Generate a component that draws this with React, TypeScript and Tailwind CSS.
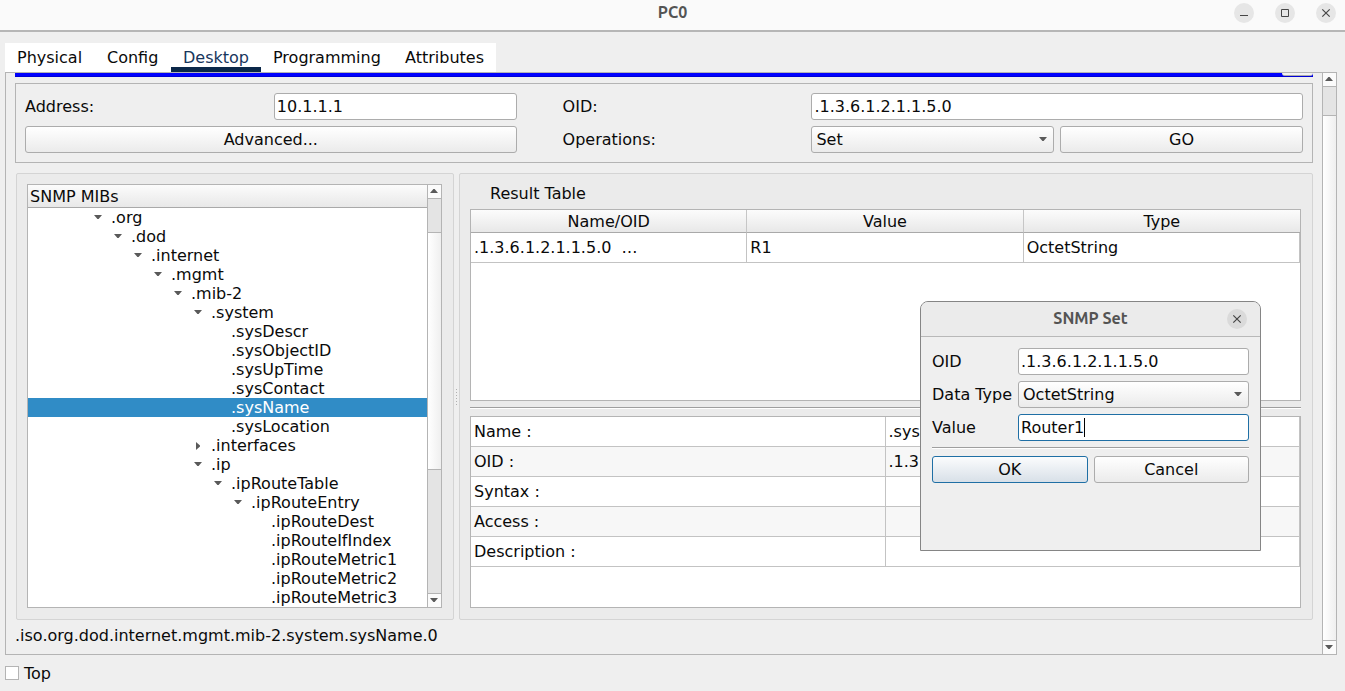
import type { ReactNode } from "react";

type Node = { name: string; depth: number; state?: "open" | "closed"; selected?: boolean };

const nodes: Node[] = [
  { name: ".org", depth: 0, state: "open" },
  { name: ".dod", depth: 1, state: "open" },
  { name: ".internet", depth: 2, state: "open" },
  { name: ".mgmt", depth: 3, state: "open" },
  { name: ".mib-2", depth: 4, state: "open" },
  { name: ".system", depth: 5, state: "open" },
  { name: ".sysDescr", depth: 6 },
  { name: ".sysObjectID", depth: 6 },
  { name: ".sysUpTime", depth: 6 },
  { name: ".sysContact", depth: 6 },
  { name: ".sysName", depth: 6, selected: true },
  { name: ".sysLocation", depth: 6 },
  { name: ".interfaces", depth: 5, state: "closed" },
  { name: ".ip", depth: 5, state: "open" },
  { name: ".ipRouteTable", depth: 6, state: "open" },
  { name: ".ipRouteEntry", depth: 7, state: "open" },
  { name: ".ipRouteDest", depth: 8 },
  { name: ".ipRouteIfIndex", depth: 8 },
  { name: ".ipRouteMetric1", depth: 8 },
  { name: ".ipRouteMetric2", depth: 8 },
  { name: ".ipRouteMetric3", depth: 8 },
];

const details = [
  ["Name :", ".sysName"],
  ["OID :", ".1.3.6.1.2.1.1.5"],
  ["Syntax :", ""],
  ["Access :", ""],
  ["Description :", ""],
];

const tabs = ["Physical", "Config", "Desktop", "Programming", "Attributes"];

const raised = "bg-linear-to-b from-white to-[#ebebeb]";
const field =
  "h-[27px] w-full min-w-0 rounded-[3px] border border-[#acacac] bg-white px-[2px] outline-none";
const button = `h-[27px] w-full min-w-0 rounded-[3px] border border-[#acacac] ${raised}`;

function Arrow({ dir }: { dir: "up" | "down" | "right" }) {
  const d = { up: "M0 5h8L4.6 1h-1.2z", down: "M0 1h8L4.6 5h-1.2z", right: "M2 0v8L6 4.6v-1.2z" }[dir];
  return (
    <svg width="8" height="8" viewBox="0 0 8 8" className="block shrink-0" aria-hidden="true">
      <path d={d} fill="#5a5a5a" />
    </svg>
  );
}

function ScrollBar({ before, handle }: { before: string; handle: string }) {
  return (
    <div className="flex w-[14px] shrink-0 flex-col border-l border-[#b4b4b4] bg-[#e4e4e4]">
      <button
        aria-label="Scroll up"
        className="flex h-[14px] shrink-0 items-center border-b border-[#b4b4b4] bg-[#fbfbfb] pl-[2px]"
      >
        <Arrow dir="up" />
      </button>
      <div className={`shrink-0 ${before}`} />
      <div className={`border-t border-[#b4b4b4] bg-linear-to-r from-white to-[#efefef] ${handle}`} />
      <div className="min-h-0 flex-1" />
      <button
        aria-label="Scroll down"
        className="flex h-[14px] shrink-0 items-center border-t border-[#b4b4b4] bg-[#fbfbfb] pl-[2px]"
      >
        <Arrow dir="down" />
      </button>
    </div>
  );
}

function Combo({ id, value }: { id: string; value: string }) {
  return (
    <div className="relative min-w-0">
      <select
        id={id}
        defaultValue={value}
        className={`h-[27px] w-full appearance-none rounded-[3px] border border-[#acacac] pr-5 pl-1 outline-none ${raised}`}
      >
        <option>{value}</option>
      </select>
      <span className="pointer-events-none absolute inset-y-0 right-[7px] flex items-center">
        <Arrow dir="down" />
      </span>
    </div>
  );
}

function WindowButton({ label, tone, children }: { label: string; tone: string; children: ReactNode }) {
  return (
    <button aria-label={label} className={`flex size-5 items-center justify-center rounded-full ${tone}`}>
      <svg width="20" height="20" viewBox="0 0 20 20" fill="none" stroke="#464646" strokeWidth="1">
        {children}
      </svg>
    </button>
  );
}

function Divider() {
  return <hr className="h-[2px] w-full border-0 border-t border-[#9f9f9f] bg-white" />;
}

function MibTree() {
  return (
    <section className="w-[438px] shrink-0 rounded-[2px] border border-[#d4d4d4] bg-[#ebebeb] pt-[10px] pr-[11px] pb-[11px] pl-[10px]">
      <div className="flex h-full border border-[#b4b4b4] bg-white">
        <div className="min-w-0 flex-1">
          <div className="h-[23px] border-b border-[#a9a9a9] bg-linear-to-b from-[#fcfcfc] to-[#e8e8e8] pl-[2px] leading-[23px]">
            SNMP MIBs
          </div>
          <ul role="tree" aria-label="SNMP MIBs">
            {nodes.map((n) => (
              <li
                key={n.name}
                role="treeitem"
                aria-selected={!!n.selected}
                className={`flex h-[19px] items-center leading-[19px] ${n.selected ? "bg-[#308cc6] text-white" : ""}`}
                style={{ paddingLeft: 66 + n.depth * 20 }}
              >
                <span className="w-[17px] shrink-0">{n.state && <Arrow dir={n.state === "open" ? "down" : "right"} />}</span>
                {n.name}
              </li>
            ))}
          </ul>
        </div>
        <ScrollBar before="h-[33px]" handle="h-[238px] border-b" />
      </div>
    </section>
  );
}

function Results() {
  return (
    <section className="flex min-w-0 flex-1 flex-col rounded-[2px] border border-[#d4d4d4] bg-[#ebebeb] pt-[10px] pr-[11px] pb-[11px] pl-[10px]">
      <h2 className="h-[25px] shrink-0 pl-5 leading-[19px]">Result Table</h2>
      <div className="min-h-[192px] flex-1 border border-[#b4b4b4] bg-white">
        <table className="w-full table-fixed border-separate border-spacing-0">
          <thead>
            <tr className="h-[23px]">
              {["Name/OID", "Value", "Type"].map((h) => (
                <th
                  key={h}
                  className="h-[23px] border-r border-b border-r-[#c6c6c6] border-b-[#a9a9a9] bg-linear-to-b from-[#fcfcfc] to-[#e8e8e8] p-0 pt-[2px] leading-5 font-normal last:border-r-0"
                >
                  {h}
                </th>
              ))}
            </tr>
          </thead>
          <tbody>
            <tr>
              {[".1.3.6.1.2.1.1.5.0\u00a0 …", "R1", "OctetString"].map((c) => (
                <td key={c} className="h-[30px] border-r border-b border-[#c3c3c3] p-0 pl-[3px] leading-[29px]">
                  {c}
                </td>
              ))}
            </tr>
          </tbody>
        </table>
      </div>
      <div className="shrink-0 pt-[6px] pb-[7px]">
        <Divider />
      </div>
      <div className="min-h-[192px] flex-1 border border-[#b4b4b4] bg-white">
        <table className="w-full table-fixed border-separate border-spacing-0">
          <tbody>
            {details.map(([k, v]) => (
              <tr key={k} className="even:bg-[#f7f7f7]">
                <th
                  scope="row"
                  className="h-[30px] border-r border-b border-[#c3c3c3] p-0 pl-[3px] text-left leading-[29px] font-normal"
                >
                  {k}
                </th>
                <td className="h-[30px] border-r border-b border-[#c3c3c3] p-0 pl-[3px] leading-[29px]">{v}</td>
              </tr>
            ))}
          </tbody>
        </table>
      </div>
    </section>
  );
}

function SetDialog() {
  return (
    <div
      role="dialog"
      aria-labelledby="set-title"
      className="absolute top-[301px] right-[84px] h-[250px] w-[341px] overflow-hidden rounded-t-lg border border-[#858585] bg-[#efefef]"
    >
      <header className="relative flex h-[35px] items-center justify-center border-b border-[#b8b8b8] bg-[#ebebeb] font-['Ubuntu','Open_Sans','Noto_Sans',sans-serif] text-[16px] font-semibold text-[#545454]">
        <h2 id="set-title" className="pb-[2px]">
          SNMP Set
        </h2>
        <div className="absolute right-[13px]">
          <WindowButton label="Close dialog" tone="bg-[#dadada]">
            <path d="M6.3 6.3l7.4 7.4M13.7 6.3l-7.4 7.4" strokeWidth="1.2" />
          </WindowButton>
        </div>
      </header>
      <form className="px-[11px] pt-[11px]" onSubmit={(e) => e.preventDefault()}>
        <div className="grid grid-cols-[80px_1fr] items-center gap-[6px]">
          <label htmlFor="set-oid">OID</label>
          <input id="set-oid" className={field} defaultValue=".1.3.6.1.2.1.1.5.0" />
          <label htmlFor="set-type" className="whitespace-nowrap">
            Data Type
          </label>
          <Combo id="set-type" value="OctetString" />
          <label htmlFor="set-value">Value</label>
          <div className="flex h-[27px] items-center rounded-[3px] border border-[#1f6fa5] bg-white pl-[2px]">
            <input
              id="set-value"
              className="min-w-0 caret-transparent outline-none field-sizing-content"
              defaultValue="Router1"
            />
            <span className="h-[19px] w-px bg-black" />
          </div>
        </div>
        <div className="pt-[6px] pb-[7px]">
          <Divider />
        </div>
        <div className="flex gap-[6px]">
          <button
            type="submit"
            className="h-[27px] flex-1 rounded-[3px] border border-[#1f6fa5] bg-linear-to-b from-[#fbfcfd] to-[#d8e0e8]"
          >
            OK
          </button>
          <button type="button" className={`h-[27px] flex-1 rounded-[3px] border border-[#acacac] ${raised}`}>
            Cancel
          </button>
        </div>
      </form>
    </div>
  );
}

export default function App() {
  return (
    <div className="relative flex min-h-screen flex-col bg-[#efefef] font-['DejaVu_Sans',sans-serif] text-[16px] leading-[19px] text-[#0a0a0a]">
      <header className="relative flex h-8 items-center justify-center border-b-2 border-[#b6b6b6] bg-[#fafafa] font-['Ubuntu','Open_Sans','Noto_Sans',sans-serif] text-[16px] font-semibold text-[#545454]">
        <h1 className="pb-[6px]">PC0</h1>
        <div className="absolute top-[3px] right-[9px] flex gap-[21px]">
          <WindowButton label="Minimize" tone="bg-[#e6e6e6]">
            <path d="M6 12.5h8" />
          </WindowButton>
          <WindowButton label="Maximize" tone="bg-[#e6e6e6]">
            <path d="M6.5 6.5h7v7h-7z" />
          </WindowButton>
          <WindowButton label="Close" tone="bg-[#e6e6e6]">
            <path d="M6.3 6.3l7.4 7.4M13.7 6.3l-7.4 7.4" strokeWidth="1.2" />
          </WindowButton>
        </div>
      </header>

      <div className="flex flex-1 flex-col pt-[11px] pr-2 pl-[5px]">
        <nav className="grid h-[29px] w-fit grid-cols-[90px_76px_90px_132px_103px] bg-white" role="tablist">
          {tabs.map((t) => (
            <button
              key={t}
              role="tab"
              aria-selected={t === "Desktop"}
              className={`border-b-5 pt-1 pl-3 text-left ${t === "Desktop" ? "border-[#0b2849] text-[#17365d]" : "border-transparent"}`}
            >
              {t}
            </button>
          ))}
        </nav>

        <main className="flex flex-1 border border-[#b4b4b4]">
          <div className="flex min-w-0 flex-1 flex-col px-[9px]">
            <div className="flex h-1 justify-end border-b border-[#0000d4] bg-[#0000ff]">
              <div className="h-[3px] w-[31px] rounded-b-[3px] border-b border-[#acacac] bg-[#f2f2f2]" />
            </div>

            <div className="mt-[6px] grid grid-cols-[1fr_1fr_34px_1fr_1fr_1fr] items-center gap-[6px] border border-[#b4b4b4] p-[9px]">
              <label htmlFor="address">Address:</label>
              <input id="address" className={field} defaultValue="10.1.1.1" />
              <span />
              <label htmlFor="oid">OID:</label>
              <div className="col-span-2">
                <input id="oid" className={field} defaultValue=".1.3.6.1.2.1.1.5.0" />
              </div>
              <div className="col-span-2">
                <button className={button}>Advanced...</button>
              </div>
              <span />
              <label htmlFor="operation">Operations:</label>
              <Combo id="operation" value="Set" />
              <button className={button}>GO</button>
            </div>

            <div className="mt-[10px] flex flex-1 pl-px">
              <MibTree />
              <div className="flex w-[5px] shrink-0 flex-col items-center justify-center gap-[2px]">
                {[0, 1, 2, 3, 4, 5].map((i) => (
                  <span key={i} className="size-px bg-[#b0b0b0]" />
                ))}
              </div>
              <Results />
            </div>

            <p className="h-[34px] shrink-0 leading-[32px]">.iso.org.dod.internet.mgmt.mib-2.system.sysName.0</p>
          </div>
          <ScrollBar before="h-[28px]" handle="flex-[9999]" />
        </main>

        <footer className="flex h-9 shrink-0 items-center">
          <label className="flex items-center gap-[5px]">
            <input type="checkbox" className="size-[14px] appearance-none border border-[#b4b4b4] bg-white" />
            Top
          </label>
        </footer>
      </div>

      <SetDialog />
    </div>
  );
}
